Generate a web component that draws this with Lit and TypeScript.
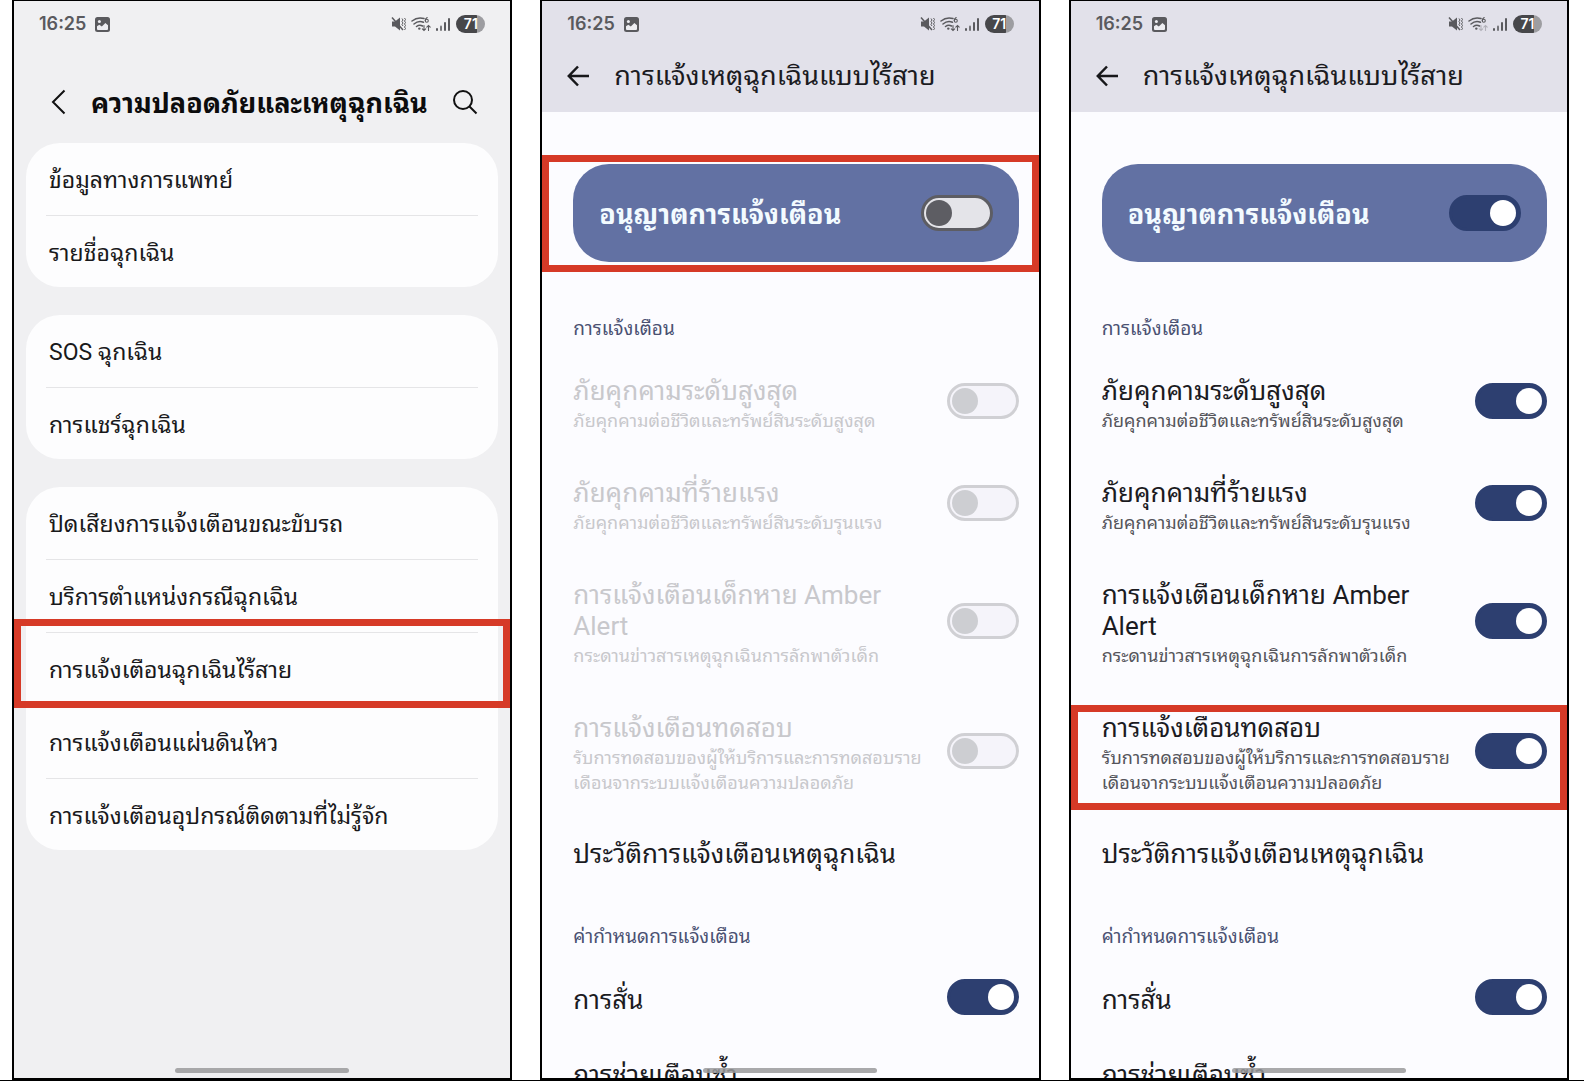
import { LitElement, html, css, nothing } from "lit";
import { customElement, property } from "lit/decorators.js";

interface Alert {
  id: string;
  title: string;
  detail: string;
}

const groups: string[][] = [
  ["ข้อมูลทางการแพทย์", "รายชื่อฉุกเฉิน"],
  ["SOS ฉุกเฉิน", "การแชร์ฉุกเฉิน"],
  [
    "ปิดเสียงการแจ้งเตือนขณะขับรถ",
    "บริการตำแหน่งกรณีฉุกเฉิน",
    "การแจ้งเตือนฉุกเฉินไร้สาย",
    "การแจ้งเตือนแผ่นดินไหว",
    "การแจ้งเตือนอุปกรณ์ติดตามที่ไม่รู้จัก",
  ],
];

const alerts: Alert[] = [
  { id: "extreme", title: "ภัยคุกคามระดับสูงสุด", detail: "ภัยคุกคามต่อชีวิตและทรัพย์สินระดับสูงสุด" },
  { id: "severe", title: "ภัยคุกคามที่ร้ายแรง", detail: "ภัยคุกคามต่อชีวิตและทรัพย์สินระดับรุนแรง" },
  { id: "amber", title: "การแจ้งเตือนเด็กหาย Amber Alert", detail: "กระดานข่าวสารเหตุฉุกเฉินการลักพาตัวเด็ก" },
  { id: "test", title: "การแจ้งเตือนทดสอบ", detail: "รับการทดสอบของผู้ให้บริการและการทดสอบรายเดือนจากระบบแจ้งเตือนความปลอดภัย" },
];

const base = css`
  * {
    box-sizing: border-box;
  }
  button,
  input,
  h1,
  h2,
  p {
    margin: 0;
    padding: 0;
    font: inherit;
    color: inherit;
  }
  button {
    border: 0;
    background: none;
    text-align: left;
    cursor: pointer;
  }
  svg {
    display: block;
  }
`;

@customElement("status-bar")
export class StatusBar extends LitElement {
  @property({ type: Boolean }) idle = false;

  static styles = [
    base,
    css`
      :host {
        display: flex;
        align-items: center;
        justify-content: space-between;
        height: 46px;
        padding: 0 25px;
        font: 600 18px/20px Inter, "Liberation Sans", sans-serif;
        color: #5a5a5e;
      }
      .left,
      .right {
        display: flex;
        align-items: center;
      }
      .left {
        gap: 9px;
      }
      .right {
        gap: 5px;
      }
      .battery {
        width: 29px;
        height: 18px;
        border-radius: 9px;
        background: linear-gradient(90deg, #47474a 71%, #9d9da1 71%);
        color: #fff;
        font-size: 14px;
        line-height: 18px;
        text-align: center;
      }
    `,
  ];

  render() {
    return html`
      <div class="left">
        <span>16:25</span>
        <svg width="15" height="15" viewBox="0 0 15 15">
          <rect width="15" height="15" rx="2.5" fill="#5a5a5e" />
          <circle cx="4.4" cy="4.4" r="1.5" fill="#eeeef2" />
          <path d="M2 11V9.300l2.300-1.600 2.500 1.900 3.600-3.700L13 8.300V12q0 1-1 1H3q-1 0-1-1z" fill="#eeeef2" />
        </svg>
      </div>
      <div class="right">
        <svg width="15" height="16" viewBox="0 0 15 16" fill="none" stroke="#5a5a5e">
          <path d="M1 5.500h3L9 1.500v13L4 10.500H1z" fill="#5a5a5e" stroke="none" />
          <path d="M1 1.500 12 14" stroke-width="1.500" />
          <path d="m11 2.500 1 1.500-1 1.500 1 1.500-1 1.500 1 1.500M13.500 2l1 1.500-1 1.500 1 1.500-1 1.500 1 1.500-1 1.500 1 1.500-1 1.500" stroke-width="1" />
        </svg>
        <svg width="20" height="16" viewBox="0 0 20 16" fill="none" stroke="#5a5a5e" stroke-width="1.500" stroke-linecap="round">
          <path d="M1 5Q6.500.5 13 2.500M3 8q4.500-4 9.500-1.800M5.500 10.500q3-2.300 6-.5" />
          <circle cx="8.300" cy="12.600" r="1.200" fill="#5a5a5e" stroke="none" />
          <path d="M16.200 1.500q-2 1.200-2 3" stroke-width="1.100" />
          <circle cx="15.800" cy="4.800" r="1.500" stroke-width="1.100" />
          <path
            d="M13 9.500v5m-1.700-1.700L13 14.500l1.700-1.700M17.500 14.500v-5m-1.700 1.700 1.700-1.700 1.700 1.700"
            stroke-width="1.100"
            opacity=${this.idle ? 0.35 : 1}
          />
        </svg>
        <svg width="15" height="14" viewBox="0 0 15 14" fill="#5a5a5e">
          <rect x="0" y="11" width="2" height="3" rx="1" />
          <rect x="4" y="8.500" width="2" height="5.500" rx="1" opacity=".8" />
          <rect x="8" y="5" width="2" height="9" rx="1" />
          <rect x="12" y="1" width="2" height="13" rx="1" />
        </svg>
        <span class="battery">71</span>
      </div>
    `;
  }
}

@customElement("safety-screen")
export class SafetyScreen extends LitElement {
  static styles = [
    base,
    css`
      :host {
        display: block;
        font: 400 23px/32px Roboto, "Noto Sans Thai Looped", "Noto Looped Thai", "Noto Sans Thai", sans-serif;
        color: #19191b;
      }
      .bar {
        display: flex;
        align-items: center;
        padding: 14px 32px 0 35px;
        height: 96px;
      }
      .bar h1 {
        flex: 1;
        padding: 3px 0 0 24px;
        font-size: 27px;
        font-weight: 700;
        line-height: 40px;
        white-space: nowrap;
        color: #0c0c0d;
      }
      .list {
        display: flex;
        flex-direction: column;
        gap: 28px;
        padding: 0 12px;
      }
      .card {
        padding: 0 20px;
        border-radius: 34px;
        background: #fdfdfe;
      }
      .item {
        position: relative;
        border-bottom: 1px solid #e5e5e7;
      }
      .item:last-child {
        border-bottom: 0;
      }
      .item button {
        display: block;
        width: 100%;
        height: 72px;
        padding: 4px 3px 0;
      }
      .item:last-child button {
        height: 71px;
      }
      .mark {
        position: absolute;
        inset: -14px -32px -3px -32px;
        border: 7px solid #d63a27;
        pointer-events: none;
      }
    `,
  ];

  render() {
    return html`
      <header class="bar">
        <button aria-label="ย้อนกลับ">
          <svg width="18" height="26" viewBox="0 0 18 26" fill="none" stroke="#111" stroke-width="2">
            <path d="M15.500 1.500 4 13l11.500 11.500" />
          </svg>
        </button>
        <h1>ความปลอดภัยและเหตุฉุกเฉิน</h1>
        <button aria-label="ค้นหา">
          <svg width="26" height="26" viewBox="0 0 26 26" fill="none" stroke="#111" stroke-width="2">
            <circle cx="11" cy="11" r="9" />
            <path d="m17.500 17.500 7 7" />
          </svg>
        </button>
      </header>
      <div class="list">
        ${groups.map(
          (group, g) => html`
            <div class="card">
              ${group.map(
                (name, i) => html`
                  <div class="item">
                    <button>${name}</button>
                    ${g === 2 && i === 2 ? html`<div class="mark"></div>` : nothing}
                  </div>
                `
              )}
            </div>
          `
        )}
      </div>
    `;
  }
}

@customElement("alerts-screen")
export class AlertsScreen extends LitElement {
  @property({ type: Boolean }) enabled = false;

  static styles = [
    base,
    css`
      :host {
        display: block;
        font: 400 26px/31px Roboto, "Noto Sans Thai Looped", "Noto Looped Thai", "Noto Sans Thai", sans-serif;
        color: #1b1b1f;
      }
      .bar {
        display: flex;
        align-items: center;
        gap: 24px;
        height: 65px;
        padding: 0 24px 8px;
        background: #e2e1ea;
      }
      .bar h1 {
        font-size: 27px;
        line-height: 40px;
        white-space: nowrap;
      }
      .body {
        padding: 52px 20px 0 31px;
      }
      .allow {
        position: relative;
        display: flex;
        align-items: center;
        justify-content: space-between;
        height: 98px;
        padding: 0 26px;
        border-radius: 36px;
        background: #6271a3;
        color: #f3fbff;
        font-size: 27px;
        font-weight: 700;
      }
      .allow label {
        padding-top: 5px;
      }
      .mark {
        position: absolute;
        inset: -9px -20px -10px -31px;
        border: 7px solid #d63a27;
        pointer-events: none;
      }
      .row .mark {
        inset: 14px -20px 8px -31px;
      }
      h2 {
        font-size: 19px;
        line-height: 24px;
        color: #4a5172;
      }
      .first {
        padding: 55px 0 13px;
      }
      .second {
        padding: 32px 0 14px;
      }
      .row {
        position: relative;
        display: flex;
        align-items: center;
        gap: 24px;
        padding: 15px 0 23px;
      }
      .row label {
        flex: 1;
        padding-top: 7px;
      }
      .detail {
        display: block;
        padding-top: 1px;
        font-size: 18px;
        line-height: 25px;
        color: #55555b;
      }
      .off,
      .off .detail {
        color: #c8c8cc;
      }
      .history {
        display: block;
        width: 100%;
        padding: 21px 0 23px;
      }
      input {
        flex: none;
        display: grid;
        align-items: center;
        width: 72px;
        height: 36px;
        padding: 0 2px;
        border: 3px solid #5d5d63;
        border-radius: 18px;
        background: #e4e4e9;
        appearance: none;
      }
      input::before {
        content: "";
        width: 26px;
        height: 26px;
        border-radius: 50%;
        background: #5d5d63;
      }
      input:checked {
        justify-content: end;
        border-color: #2d3f70;
        background: #2d3f70;
      }
      input:checked::before {
        background: #fff;
      }
      input:disabled {
        border-color: #d0d0d4;
        background: #f5f4fa;
      }
      input:disabled::before {
        background: #cdced2;
      }
    `,
  ];

  render() {
    const on = this.enabled;
    return html`
      <header class="bar">
        <button aria-label="ย้อนกลับ">
          <svg width="24" height="24" viewBox="0 0 24 24" fill="none" stroke="#17171a" stroke-width="2.500">
            <path d="M12 2.500 2.800 12l9.200 9.500M3 12h20" />
          </svg>
        </button>
        <h1>การแจ้งเหตุฉุกเฉินแบบไร้สาย</h1>
      </header>
      <div class="body">
        <div class="allow">
          <label for="allow">อนุญาตการแจ้งเตือน</label>
          <input id="allow" type="checkbox" role="switch" .checked=${on} />
          ${on ? nothing : html`<div class="mark"></div>`}
        </div>
        <h2 class="first">การแจ้งเตือน</h2>
        ${alerts.map(
          (a) => html`
            <div class="row ${on ? "" : "off"}">
              <label for=${a.id}>${a.title}<span class="detail">${a.detail}</span></label>
              <input id=${a.id} type="checkbox" role="switch" .checked=${on} ?disabled=${!on} />
              ${on && a.id === "test" ? html`<div class="mark"></div>` : nothing}
            </div>
          `
        )}
        <button class="history">ประวัติการแจ้งเตือนเหตุฉุกเฉิน</button>
        <h2 class="second">ค่ากำหนดการแจ้งเตือน</h2>
        <div class="row">
          <label for="vibrate">การสั่น</label>
          <input id="vibrate" type="checkbox" role="switch" .checked=${true} />
        </div>
        <button class="history">การช่วยเตือนซ้ำ</button>
      </div>
    `;
  }
}

@customElement("app-root")
export class AppRoot extends LitElement {
  static styles = [
    base,
    css`
      :host {
        box-sizing: border-box;
        display: grid;
        grid-template-columns: repeat(3, minmax(0, 1fr));
        gap: 28px;
        height: 100vh;
        padding: 0 15px 0 12px;
        border-bottom: 1px solid #000;
        background: #fff;
      }
      .phone {
        position: relative;
        min-height: 0;
        overflow: hidden;
        border: 2px solid #000;
        border-top-width: 1px;
        background: #fcfcff;
      }
      .grey {
        background: #f0f0f2;
      }
      .tinted {
        background: #e2e1ea;
      }
      .home {
        position: absolute;
        left: 50%;
        bottom: 5px;
        width: 174px;
        height: 5px;
        margin-left: -87px;
        border-radius: 3px;
        background: #9a9a9c;
        opacity: 0.85;
      }
    `,
  ];

  render() {
    return html`
      <section class="phone grey">
        <status-bar></status-bar>
        <safety-screen></safety-screen>
        <div class="home"></div>
      </section>
      <section class="phone">
        <status-bar class="tinted"></status-bar>
        <alerts-screen></alerts-screen>
        <div class="home"></div>
      </section>
      <section class="phone">
        <status-bar class="tinted" idle></status-bar>
        <alerts-screen enabled></alerts-screen>
        <div class="home"></div>
      </section>
    `;
  }
}
